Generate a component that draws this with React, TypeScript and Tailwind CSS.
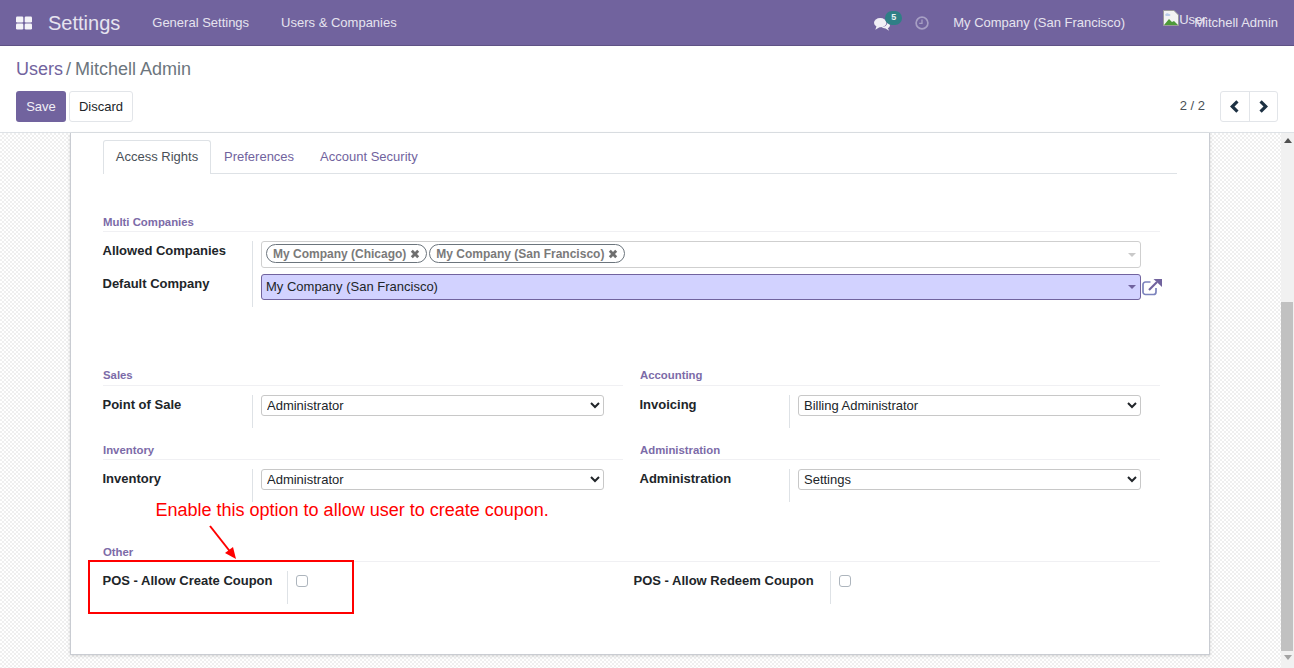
function GroupTitle({ title, className = "" }: { title: string; className?: string }) {
  return (
    <div className={`border-b border-[#f0f0f3] text-[11.375px] leading-[13px] font-bold text-[#7c6ba8] ${className}`}>
      {title}
    </div>
  );
}

function FieldLabel({ label, width = "w-[149px]" }: { label: string; width?: string }) {
  return (
    <div className={`${width} shrink-0 pt-[1px] text-[13px] leading-[18px] font-bold text-[#212529]`}>
      <span className="-ml-[0.5px] block">{label}</span>
    </div>
  );
}

function SelectField({ label, value }: { label: string; value: string }) {
  return (
    <div className="flex h-[33px]">
      <FieldLabel label={label} />
      <div className="border-l border-[#dee2e6] pl-2">
        <select
          defaultValue={value}
          className="block h-[21px] w-[343px] rounded-[3px] border border-[#c8c8c8] bg-white pl-px text-[13px] text-[#212529]"
        >
          <option>{value}</option>
        </select>
      </div>
    </div>
  );
}

function CheckField({ label, width }: { label: string; width: string }) {
  return (
    <div className="flex h-[33px]">
      <FieldLabel label={label} width={width} />
      <div className="border-l border-[#dee2e6] pl-2 pt-1">
        <input type="checkbox" className="block h-[12px] w-[12px] appearance-none rounded-[3px] border border-[#adb5bd] bg-white" />
      </div>
    </div>
  );
}

function Tag({ label }: { label: string }) {
  return (
    <span className="flex h-[19px] items-center gap-[4px] rounded-full border border-[#6c757d] pl-[6px] pr-[6px] text-[12px] font-bold text-[#7a7a7a]">
      {label}
      <svg viewBox="0 0 10 10" className="h-[10px] w-[10px]">
        <path d="M1.800 1.800l6.400 6.400M8.200 1.800l-6.400 6.400" stroke="#6f6f6f" strokeWidth="2.800" />
      </svg>
    </span>
  );
}

function Caret({ color }: { color: string }) {
  return (
    <svg viewBox="0 0 8 4" className="h-[4px] w-[8px]">
      <path d="M0 0h8L4 4z" fill={color} />
    </svg>
  );
}

export default function App() {
  return (
    <div className="flex h-[668px] w-[1294px] flex-col overflow-hidden bg-white font-['Liberation_Sans',sans-serif] text-[13px] text-[#212529]">
      <header className="flex h-[46px] shrink-0 items-center border-b border-[#5f5285] bg-[#71639e] text-[#e6e3ef]">
        <svg viewBox="0 0 16 16" className="ml-4 h-4 w-4" fill="#f4f3f8">
          <rect x="0" y="1.500" width="7.300" height="6" rx="1.200" />
          <rect x="8.700" y="1.500" width="7.300" height="6" rx="1.200" />
          <rect x="0" y="8.500" width="7.300" height="6" rx="1.200" />
          <rect x="8.700" y="8.500" width="7.300" height="6" rx="1.200" />
        </svg>
        <span className="ml-4 text-[20px]">Settings</span>
        <span className="ml-8">General Settings</span>
        <span className="ml-8">Users &amp; Companies</span>
        <div className="ml-auto flex items-center">
          <div className="relative h-4 w-4">
            <svg viewBox="0 0 18 15" className="mt-[2px] h-[14px] w-4" fill="#f1eff6">
              <ellipse cx="7" cy="6" rx="7" ry="5.200" />
              <path d="M3 9.500L1.500 14 7 10.500z" />
              <path d="M15 4.500c2 1 3 2.500 3 4s-1 3-2.500 3.600L17 15l-4-2.500c-2 0-3.500-.5-4.500-1.500 4 0 7-2.500 6.500-6.500z" />
            </svg>
            <span className="absolute -top-[4px] left-[11px] flex h-[14px] w-[17px] items-center justify-center rounded-full bg-[#2f7f86] text-[9px] font-bold text-[#e8f2f3]">
              5
            </span>
          </div>
          <svg viewBox="0 0 14 14" className="ml-[25px] h-[14px] w-[14px]" fill="none" stroke="#a79fc4" strokeWidth="1.700">
            <circle cx="7" cy="7" r="5.900" />
            <path d="M7 3.500V7.400H4.200" strokeWidth="1.300" />
          </svg>
          <span className="ml-[24px]">My Company (San Francisco)</span>
          <div className="ml-[38px] -mt-[10px] flex h-[16px] w-[16px] items-start">
            <svg viewBox="0 0 16 16" className="h-4 w-4 shrink-0">
              <path d="M0.500 0.500H11L15.500 5V15.500H0.500z" fill="#f3f3f3" stroke="#9a9a9a" />
              <path d="M1 15l5-6 3 3 2-1 4 4z" fill="#4e9a3a" />
              <path d="M2 5c1-2 3-2 4-1 2 0 2 2 0 2H3z" fill="#b9cbe8" />
            </svg>
            <span className="mt-[2px] text-[13px] leading-[16px]">User</span>
          </div>
          <span className="ml-[15px] mr-4">Mitchell Admin</span>
        </div>
      </header>

      <div className="h-[87px] shrink-0 border-b border-[#dee2e6] px-4">
        <div className="flex h-[45px] items-center pt-[2px] text-[18px]">
          <span className="text-[#71639e]">Users</span>
          <span className="ml-[3px] text-[#6c757d]">/</span>
          <span className="ml-[4px] text-[#6c757d]">Mitchell Admin</span>
        </div>
        <div className="flex items-start">
          <button className="h-[31px] w-[50px] rounded-[3px] bg-[#71639e] text-[#f1eff6]">Save</button>
          <button className="ml-[3px] h-[31px] w-[64px] rounded-[3px] border border-[#e2e5e9] bg-white">Discard</button>
          <span className="ml-auto mr-[15px] mt-[5px] text-[#495057]">2 / 2</span>
          <div className="flex h-[31px] w-[58px] rounded-[3px] border border-[#e2e5e9]">
            <div className="flex flex-1 items-center justify-center border-r border-[#e2e5e9]">
              <svg viewBox="0 0 10 14" className="h-[13px] w-[9px]" fill="#1d3143">
                <path d="M7 0l2.500 2.500L5 7l4.500 4.500L7 14 0 7z" />
              </svg>
            </div>
            <div className="flex flex-1 items-center justify-center">
              <svg viewBox="0 0 10 14" className="h-[13px] w-[9px]" fill="#1d3143">
                <path d="M3 0L.5 2.500 5 7 .5 11.500 3 14l7-7z" />
              </svg>
            </div>
          </div>
        </div>
      </div>

      <div className="flex min-h-0 flex-1">
        <main className="relative min-w-0 flex-1 bg-[repeating-conic-gradient(#efefef_0_25%,#ffffff_0_50%)] bg-[length:4px_4px]">
          <div className="ml-[70px] h-[522px] w-[1140px] border-x border-b border-[#c9ccd2] bg-white pl-[32px] pt-[7px] shadow-[0_1px_3px_rgba(0,0,0,0.15)]">
            <nav className="flex h-[34px] w-[1074px] border-b border-[#dee2e6] text-[#71639e]">
              <div className="flex h-[34px] w-[108px] items-center justify-center rounded-t-[3px] border border-b-0 border-[#dee2e6] bg-white pb-[2px] text-[#495057]">
                Access Rights
              </div>
              <div className="ml-[13px] pt-[7px]">Preferences</div>
              <div className="ml-[26px] pt-[7px]">Account Security</div>
            </nav>

            <div className="w-[1057px]">
              <GroupTitle title="Multi Companies" className="mt-[41px] h-[17px] pt-px" />
              <div className="mt-[9px] flex h-[66px]">
                <div className="w-[149px] shrink-0">
                  <FieldLabel label="Allowed Companies" />
                  <div className="mt-[14px]">
                    <FieldLabel label="Default Company" />
                  </div>
                </div>
                <div className="border-l border-[#dee2e6] pl-2">
                  <div className="flex h-[27px] w-[880px] items-center gap-[2px] rounded-[3px] border border-[#cfcfcf] pb-[2px] pl-1 pr-[4px]">
                    <Tag label="My Company (Chicago)" />
                    <Tag label="My Company (San Francisco)" />
                    <span className="ml-auto mt-[2px]">
                      <Caret color="#c9c9c9" />
                    </span>
                  </div>
                  <div className="mt-[6px] flex items-center">
                    <div className="flex h-[26px] w-[880px] items-center justify-between rounded-[3px] border border-[#71639e] bg-[#d2d2ff] pl-1 pr-[4px]">
                      <span>My Company (San Francisco)</span>
                      <Caret color="#71639e" />
                    </div>
                    <svg viewBox="0 0 20 18" className="ml-[1px] h-[18px] w-[20px]" fill="none">
                      <path d="M14 10v4a2.500 2.500 0 0 1-2.500 2.500H3.500A2.500 2.500 0 0 1 1 14V6.500A2.500 2.500 0 0 1 3.500 4h5" stroke="#7c83bd" strokeWidth="1.700" />
                      <path d="M7 12l8-8" stroke="#71639e" strokeWidth="2.200" />
                      <path d="M11.500 1H20V9z" fill="#71639e" />
                    </svg>
                  </div>
                </div>
              </div>

              <div className="mt-[60px] grid grid-cols-[520px_520px] gap-x-[17px]">
                <div>
                  <GroupTitle title="Sales" className="h-[19px] pt-[2px]" />
                  <div className="mt-[9px]">
                    <SelectField label="Point of Sale" value="Administrator" />
                  </div>
                  <GroupTitle title="Inventory" className="mt-[16px] h-[16px]" />
                  <div className="mt-[9px]">
                    <SelectField label="Inventory" value="Administrator" />
                  </div>
                </div>
                <div>
                  <GroupTitle title="Accounting" className="h-[19px] pt-[2px]" />
                  <div className="mt-[9px]">
                    <SelectField label="Invoicing" value="Billing Administrator" />
                  </div>
                  <GroupTitle title="Administration" className="mt-[16px] h-[16px]" />
                  <div className="mt-[9px]">
                    <SelectField label="Administration" value="Settings" />
                  </div>
                </div>
              </div>

              <GroupTitle title="Other" className="mt-[44px] h-[16px]" />
              <div className="mt-[9px] flex">
                <CheckField label="POS - Allow Create Coupon" width="w-[184px]" />
                <div className="ml-[326px]">
                  <CheckField label="POS - Allow Redeem Coupon" width="w-[196px]" />
                </div>
              </div>
            </div>
          </div>

          {/* annotation on top of the screenshot */}
          <div className="absolute left-[155.5px] top-[366px] text-[18px] leading-[22px] text-[#ff0000]">
            Enable this option to allow user to create coupon.
          </div>
          <svg viewBox="0 0 30 38" className="absolute left-[208px] top-[391px] h-[38px] w-[30px]">
            <path d="M2 2L24 30" stroke="#ff0000" strokeWidth="2" />
            <path d="M28 35L17 29 25 23z" fill="#ff0000" />
          </svg>
          <div className="absolute left-[88px] top-[427px] h-[54px] w-[266px] border-2 border-[#ff0000]" />
        </main>

        <aside className="relative w-[13px] shrink-0 bg-[#f1f1f1]">
          <svg viewBox="0 0 8 5" className="absolute left-[3px] top-[5px] h-[5px] w-2">
            <path d="M0 5h8L4 0z" fill="#505050" />
          </svg>
          <div className="absolute left-0 top-[169px] h-[349px] w-[12px] bg-[#c1c1c1]" />
          <svg viewBox="0 0 8 5" className="absolute bottom-[8px] left-[3px] h-[5px] w-2">
            <path d="M0 0h8L4 5z" fill="#a3a3a3" />
          </svg>
        </aside>
      </div>
    </div>
  );
}
